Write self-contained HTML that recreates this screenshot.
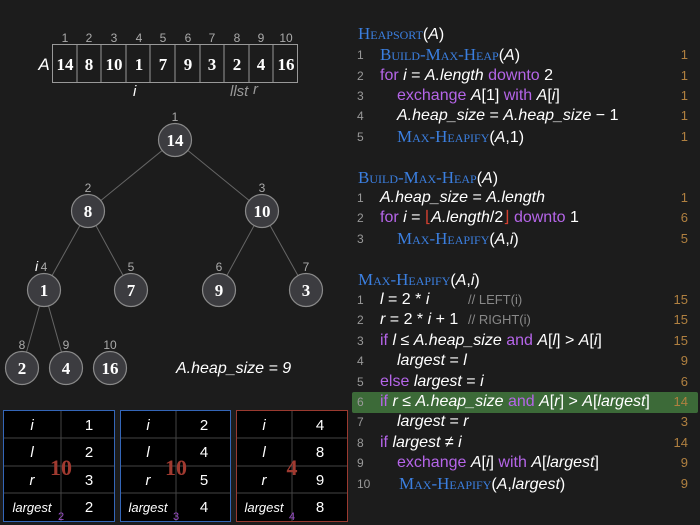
<!DOCTYPE html>
<html><head><meta charset="utf-8"><style>
html,body{margin:0;padding:0;background:#1c1c1c;width:700px;height:525px;overflow:hidden}
body{position:relative;font-family:"Liberation Sans",sans-serif;color:#fff}
.ln{position:absolute;left:0;width:700px;height:20px;font-size:16px;line-height:20px;white-space:nowrap}
.n{position:absolute;left:357px;font-size:12px;color:#999}
.c{position:absolute;right:12px;font-size:13px;color:#b08040}
.t{position:absolute;left:380px}
.t2{position:absolute;left:397px}
.h{position:absolute;left:358px;font-family:"Liberation Serif",serif;font-variant:small-caps;color:#3b7fe0;font-size:17px}
.k{color:#b565e8}
.f{font-family:"Liberation Serif",serif;font-variant:small-caps;color:#3b7fe0;font-size:17px}
i{font-style:italic}
.cm{color:#888;font-size:13px}
</style></head><body>
<svg width="350" height="525" style="position:absolute;left:0;top:0" font-family="Liberation Sans">
<g fill="#aaa" font-size="12" text-anchor="middle">
<text x="65" y="42">1</text><text x="89" y="42">2</text><text x="114" y="42">3</text><text x="139" y="42">4</text><text x="163" y="42">5</text><text x="188" y="42">6</text><text x="212" y="42">7</text><text x="237" y="42">8</text><text x="261" y="42">9</text><text x="286" y="42">10</text>
</g>
<rect x="52.5" y="44.5" width="245" height="38" fill="none" stroke="#999"/>
<g stroke="#999"><line x1="77" y1="44" x2="77" y2="82"/><line x1="101" y1="44" x2="101" y2="82"/><line x1="126" y1="44" x2="126" y2="82"/><line x1="150" y1="44" x2="150" y2="82"/><line x1="175" y1="44" x2="175" y2="82"/><line x1="200" y1="44" x2="200" y2="82"/><line x1="224" y1="44" x2="224" y2="82"/><line x1="249" y1="44" x2="249" y2="82"/><line x1="273" y1="44" x2="273" y2="82"/></g>
<text x="44" y="70" font-size="17" font-style="italic" fill="#fff" text-anchor="middle">A</text>
<g fill="#fff" font-size="17" font-weight="bold" text-anchor="middle" font-family="Liberation Serif">
<text x="65" y="70">14</text><text x="89" y="70">8</text><text x="114" y="70">10</text><text x="139" y="70">1</text><text x="163" y="70">7</text><text x="188" y="70">9</text><text x="212" y="70">3</text><text x="237" y="70">2</text><text x="261" y="70">4</text><text x="286" y="70">16</text>
</g>
<text x="133" y="96" font-size="15" font-style="italic" fill="#fff">i</text>
<text x="230" y="96" font-size="15" font-style="italic" fill="#999">llst</text>
<text x="253" y="94" font-size="15" font-style="italic" fill="#999">r</text>
<g stroke="#666" stroke-width="1">
<line x1="175" y1="140" x2="88" y2="211"/><line x1="175" y1="140" x2="262" y2="211"/>
<line x1="88" y1="211" x2="44" y2="290"/><line x1="88" y1="211" x2="131" y2="290"/>
<line x1="262" y1="211" x2="219" y2="290"/><line x1="262" y1="211" x2="306" y2="290"/>
<line x1="44" y1="290" x2="22" y2="368"/><line x1="44" y1="290" x2="66" y2="368"/>
</g>
<g fill="#3c3c40" stroke="#8a8a8a" stroke-width="1.2">
<circle cx="175" cy="140" r="16.5"/><circle cx="88" cy="211" r="16.5"/><circle cx="262" cy="211" r="16.5"/>
<circle cx="44" cy="290" r="16.5"/><circle cx="131" cy="290" r="16.5"/><circle cx="219" cy="290" r="16.5"/><circle cx="306" cy="290" r="16.5"/>
<circle cx="22" cy="368" r="16.5"/><circle cx="66" cy="368" r="16.5"/><circle cx="110" cy="368" r="16.5"/>
</g>
<g fill="#fff" font-size="17" font-weight="bold" text-anchor="middle" font-family="Liberation Serif">
<text x="175" y="146">14</text><text x="88" y="217">8</text><text x="262" y="217">10</text>
<text x="44" y="296">1</text><text x="131" y="296">7</text><text x="219" y="296">9</text><text x="306" y="296">3</text>
<text x="22" y="374">2</text><text x="66" y="374">4</text><text x="110" y="374">16</text>
</g>
<g fill="#aaa" font-size="12" text-anchor="middle">
<text x="175" y="121">1</text><text x="88" y="192">2</text><text x="262" y="192">3</text>
<text x="44" y="271">4</text><text x="131" y="271">5</text><text x="219" y="271">6</text><text x="306" y="271">7</text>
<text x="22" y="349">8</text><text x="66" y="349">9</text><text x="110" y="349">10</text>
</g>
<text x="35" y="271" font-size="14" font-style="italic" fill="#fff">i</text>
<text x="176" y="373" font-size="16" font-style="italic" fill="#fff">A.heap_size = 9</text>
<g font-size="15" fill="#fff">
<g transform="translate(3,410)">
<rect x="0.5" y="0.5" width="111" height="111" fill="#000" stroke="#3466b8"/>
<g stroke="#444"><line x1="58" y1="1" x2="58" y2="111"/><line x1="1" y1="28" x2="111" y2="28"/><line x1="1" y1="56" x2="111" y2="56"/><line x1="1" y1="83" x2="111" y2="83"/></g>
<text x="58" y="65" font-size="22" fill="#a03a30" font-weight="bold" text-anchor="middle" font-family="Liberation Serif">10</text>
<g font-style="italic" text-anchor="middle"><text x="29" y="20">i</text><text x="29" y="47">l</text><text x="29" y="75">r</text><text x="29" y="102" font-size="13">largest</text></g>
<g text-anchor="middle"><text x="86" y="20">1</text><text x="86" y="47">2</text><text x="86" y="75">3</text><text x="86" y="102">2</text></g>
<text x="58" y="110" font-size="11" fill="#9a4fc8" text-anchor="middle">2</text>
</g>
<g transform="translate(120,410)">
<rect x="0.5" y="0.5" width="110" height="111" fill="#000" stroke="#3466b8"/>
<g stroke="#444"><line x1="56" y1="1" x2="56" y2="111"/><line x1="1" y1="28" x2="110" y2="28"/><line x1="1" y1="56" x2="110" y2="56"/><line x1="1" y1="83" x2="110" y2="83"/></g>
<text x="56" y="65" font-size="22" fill="#a03a30" font-weight="bold" text-anchor="middle" font-family="Liberation Serif">10</text>
<g font-style="italic" text-anchor="middle"><text x="28" y="20">i</text><text x="28" y="47">l</text><text x="28" y="75">r</text><text x="28" y="102" font-size="13">largest</text></g>
<g text-anchor="middle"><text x="84" y="20">2</text><text x="84" y="47">4</text><text x="84" y="75">5</text><text x="84" y="102">4</text></g>
<text x="56" y="110" font-size="11" fill="#9a4fc8" text-anchor="middle">3</text>
</g>
<g transform="translate(236,410)">
<rect x="0.5" y="0.5" width="111" height="111" fill="#000" stroke="#9a3a30"/>
<g stroke="#444"><line x1="56" y1="1" x2="56" y2="111"/><line x1="1" y1="28" x2="111" y2="28"/><line x1="1" y1="56" x2="111" y2="56"/><line x1="1" y1="83" x2="111" y2="83"/></g>
<text x="56" y="65" font-size="22" fill="#a03a30" font-weight="bold" text-anchor="middle" font-family="Liberation Serif">4</text>
<g font-style="italic" text-anchor="middle"><text x="28" y="20">i</text><text x="28" y="47">l</text><text x="28" y="75">r</text><text x="28" y="102" font-size="13">largest</text></g>
<g text-anchor="middle"><text x="84" y="20">4</text><text x="84" y="47">8</text><text x="84" y="75">9</text><text x="84" y="102">8</text></g>
<text x="56" y="110" font-size="11" fill="#9a4fc8" text-anchor="middle">4</text>
</g>
</g>
</svg>

<div class="ln" style="top:24px"><span class="h">Heapsort<span style="color:#fff;font-family:'Liberation Sans';font-variant:normal;font-size:16px">(<i>A</i>)</span></span></div>
<div class="ln" style="top:45px"><span class="n">1</span><span class="t"><span class="f">Build-Max-Heap</span>(<i>A</i>)</span><span class="c">1</span></div>
<div class="ln" style="top:66px"><span class="n">2</span><span class="t"><span class="k">for</span> <i>i</i> = <i>A.length</i> <span class="k">downto</span> 2</span><span class="c">1</span></div>
<div class="ln" style="top:86px"><span class="n">3</span><span class="t2"><span class="k">exchange</span> <i>A</i>[1] <span class="k">with</span> <i>A</i>[<i>i</i>]</span><span class="c">1</span></div>
<div class="ln" style="top:106px"><span class="n">4</span><span class="t2"><i>A.heap_size</i> = <i>A.heap_size</i> − 1</span><span class="c">1</span></div>
<div class="ln" style="top:127px"><span class="n">5</span><span class="t2"><span class="f">Max-Heapify</span>(<i>A</i>,1)</span><span class="c">1</span></div>

<div class="ln" style="top:168px"><span class="h">Build-Max-Heap<span style="color:#fff;font-family:'Liberation Sans';font-variant:normal;font-size:16px">(<i>A</i>)</span></span></div>
<div class="ln" style="top:188px"><span class="n">1</span><span class="t"><i>A.heap_size</i> = <i>A.length</i></span><span class="c">1</span></div>
<div class="ln" style="top:208px"><span class="n">2</span><span class="t"><span class="k">for</span> <i>i</i> = <span style="color:#d04030">⌊</span><i>A.length</i>/2<span style="color:#d04030">⌋</span> <span class="k">downto</span> 1</span><span class="c">6</span></div>
<div class="ln" style="top:229px"><span class="n">3</span><span class="t2"><span class="f">Max-Heapify</span>(<i>A</i>,<i>i</i>)</span><span class="c">5</span></div>

<div class="ln" style="top:270px"><span class="h">Max-Heapify<span style="color:#fff;font-family:'Liberation Sans';font-variant:normal;font-size:16px">(<i>A</i>,<i>i</i>)</span></span></div>
<div class="ln" style="top:290px"><span class="n">1</span><span class="t"><i>l</i> = 2 * <i>i</i></span><span class="cm" style="position:absolute;left:468px">// LEFT(i)</span><span class="c">15</span></div>
<div class="ln" style="top:310px"><span class="n">2</span><span class="t"><i>r</i> = 2 * <i>i</i> + 1</span><span class="cm" style="position:absolute;left:468px">// RIGHT(i)</span><span class="c">15</span></div>
<div class="ln" style="top:331px"><span class="n">3</span><span class="t"><span class="k">if</span> <i>l</i> ≤ <i>A.heap_size</i> <span class="k">and</span> <i>A</i>[<i>l</i>] &gt; <i>A</i>[<i>i</i>]</span><span class="c">15</span></div>
<div class="ln" style="top:351px"><span class="n">4</span><span class="t2"><i>largest</i> = <i>l</i></span><span class="c">9</span></div>
<div class="ln" style="top:372px"><span class="n">5</span><span class="t"><span class="k">else</span> <i>largest</i> = <i>i</i></span><span class="c">6</span></div>
<div style="position:absolute;left:352px;top:392px;width:346px;height:21px;background:#3c6a38;border-radius:2px"></div>
<div class="ln" style="top:392px"><span class="n">6</span><span class="t"><span class="k">if</span> <i>r</i> ≤ <i>A.heap_size</i> <span class="k">and</span> <i>A</i>[<i>r</i>] &gt; <i>A</i>[<i>largest</i>]</span><span class="c">14</span></div>
<div class="ln" style="top:412px"><span class="n">7</span><span class="t2"><i>largest</i> = <i>r</i></span><span class="c">3</span></div>
<div class="ln" style="top:433px"><span class="n">8</span><span class="t"><span class="k">if</span> <i>largest</i> ≠ <i>i</i></span><span class="c">14</span></div>
<div class="ln" style="top:453px"><span class="n">9</span><span class="t2"><span class="k">exchange</span> <i>A</i>[<i>i</i>] <span class="k">with</span> <i>A</i>[<i>largest</i>]</span><span class="c">9</span></div>
<div class="ln" style="top:474px"><span class="n">10</span><span class="t2" style="left:399px"><span class="f">Max-Heapify</span>(<i>A</i>,<i>largest</i>)</span><span class="c">9</span></div>
</body></html>
